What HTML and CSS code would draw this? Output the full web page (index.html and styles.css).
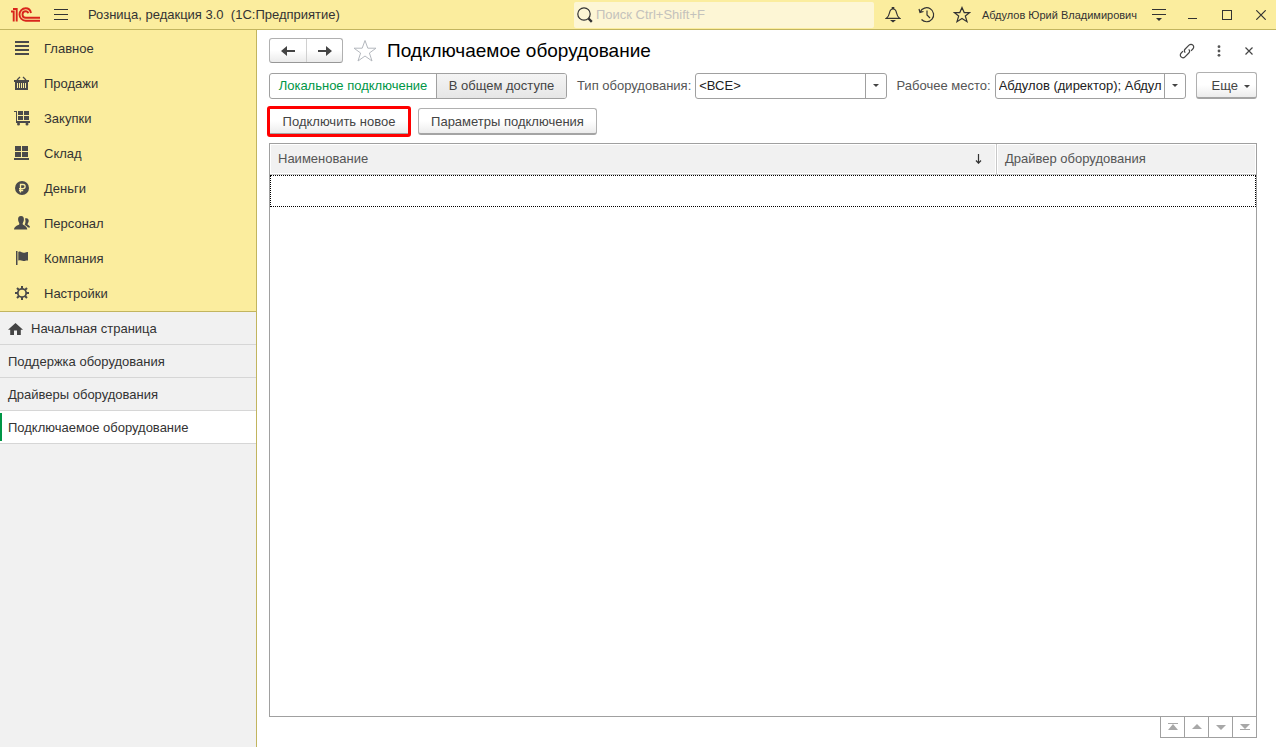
FILE: index.html
```html
<!DOCTYPE html>
<html lang="ru">
<head>
<meta charset="utf-8">
<title>Розница, редакция 3.0 (1С:Предприятие)</title>
<link rel="stylesheet" href="styles.css">
</head>
<body>
<header class="topbar">
  <svg class="logo" width="30" height="16" viewBox="0 0 30 16" fill="none" stroke="#d9261c" stroke-width="1.900"><path d="M0 4.500H2.700V14.500M2 2H5.700V14.500"/><path d="M20 6C19.400 3.200 17.500 1.300 14.700 1.300C11.200 1.300 8.500 4 8.500 7.400C8.500 11 11.400 13.700 14.700 13.700H29"/><path d="M17.200 6.300C16.900 4.900 15.900 4.200 14.700 4.200C12.900 4.200 11.500 5.500 11.500 7.400C11.500 9.400 13 10.800 14.700 10.800H29"/></svg>
  <button class="icon-btn menu-btn" aria-label="Меню"><svg width="14" height="12" viewBox="0 0 14 12" stroke="#333" shape-rendering="crispEdges"><path d="M0 .5H14M0 5.500H14M0 10.500H14"/></svg></button>
  <span class="app-title">Розница, редакция 3.0&nbsp; (1С:Предприятие)</span>
  <label class="search">
    <svg width="16" height="16" viewBox="0 0 16 16" fill="none" stroke="#333"><circle cx="7" cy="7" r="6.200" stroke-width="1.200"/><path d="M11.500 11.500L14.800 14.800" stroke-width="2.400"/></svg>
    <input type="text" placeholder="Поиск Ctrl+Shift+F" aria-label="Поиск">
  </label>
  <div class="tools">
    <button class="icon-btn" aria-label="Уведомления"><svg width="16" height="18" viewBox="0 0 16 18" fill="none" stroke="#333" stroke-width="1.200"><path d="M1.200 12.400H14.800C12.300 10.500 11.800 9 11.400 6.500C11 4.300 10 3 8 3C6 3 5 4.300 4.600 6.500C4.200 9 3.700 10.500 1.200 12.400ZM7.300 3V1.500H8.700V3"/><path d="M5 14H11L8 16.500Z" fill="#333" stroke="none"/></svg></button>
    <button class="icon-btn" aria-label="История"><svg width="18" height="18" viewBox="0 0 18 18" fill="none" stroke="#333" stroke-width="1.200"><path d="M2.200 6A7 7 0 1 1 3.500 13.500M1 3L2 6.400L5.500 5.500M9 4.500V9L12 12"/></svg></button>
    <button class="icon-btn" aria-label="Избранное"><svg width="18" height="18" viewBox="0 0 18 18" fill="none" stroke="#333" stroke-width="1.200"><path d="M9 1.500L11.200 6.600H16.500L12.300 10L14 15.700L9 12.400L4 15.700L5.700 10L1.500 6.600H6.800Z"/></svg></button>
  </div>
  <a class="user" href="#">Абдулов Юрий Владимирович</a>
  <div class="window-tools">
    <button class="icon-btn options" aria-label="Настройки окна"><svg width="14" height="14" viewBox="0 0 14 14"><path d="M0 1.500H14M0 6.500H14" stroke="#333"/><path d="M4 10H10L7 13Z" fill="#333"/></svg></button>
    <button class="icon-btn" aria-label="Свернуть"><svg width="10" height="10" viewBox="0 0 10 10" stroke="#333" shape-rendering="crispEdges"><path d="M0 8.500H9"/></svg></button>
    <button class="icon-btn" aria-label="Развернуть"><svg width="10" height="10" viewBox="0 0 10 10" fill="none" stroke="#333" shape-rendering="crispEdges"><path d="M.5.5H9.500V9.500H.5Z"/></svg></button>
    <button class="icon-btn" aria-label="Закрыть"><svg width="10" height="10" viewBox="0 0 10 10" stroke="#333" stroke-width="1.200"><path d="M.3.3L9.700 9.700M9.700.3L.3 9.700"/></svg></button>
  </div>
</header>
<div class="body">
  <aside class="sidebar">
    <nav class="sections">
      <a href="#"><svg viewBox="0 0 16 16" stroke="#4a4a4a" stroke-width="2"><path d="M1 1H15M1 5H15M1 9H15M1 13H15" shape-rendering="crispEdges"/></svg>Главное</a>
      <a href="#"><svg viewBox="0 0 16 16" fill="#4a4a4a"><path d="M0 4H15V6H14V14H1V6H0ZM3 7V12H4V7ZM5 7V12H6V7ZM7 7V12H8V7ZM9 7V12H10V7ZM11 7V12H12V7Z" fill-rule="evenodd"/><path d="M3 4L6 1M12 4L9 1" stroke="#4a4a4a" stroke-width="1.300"/></svg>Продажи</a>
      <a href="#"><svg viewBox="0 0 16 16" fill="#4a4a4a"><path d="M0 0H3V10H16V11.500H2V1H0ZM4 0H9V4H4ZM10 0H15V4H10ZM4 5H9V9H4ZM10 5H15V9H10Z" shape-rendering="crispEdges"/><circle cx="4.500" cy="13" r="1.500"/><circle cx="13" cy="13" r="1.500"/></svg>Закупки</a>
      <a href="#"><svg viewBox="0 0 16 16" fill="#4a4a4a" shape-rendering="crispEdges"><path d="M1 0H7V5H1ZM8 0H14V5H8ZM1 6H7V11H1ZM8 6H14V11H8ZM0 12H15V14H0Z"/></svg>Склад</a>
      <a href="#"><svg viewBox="0 0 16 16"><circle cx="8" cy="7" r="7" fill="#4a4a4a"/><path d="M6.500 11.500V3.500H9A2.100 2.100 0 0 1 9 7.700H5M5 9.500H9.200" fill="none" stroke="#fbed9e" stroke-width="1.300"/></svg>Деньги</a>
      <a href="#"><svg viewBox="0 0 16 16" fill="#4a4a4a"><path d="M7 0C9.300 0 10 1.600 9.900 3.700C9.800 5.500 8.800 6.500 8.600 8C9 9.500 13 9.500 13.300 13.500H0C.3 9.500 5 9.500 5.400 8C5.200 6.500 4.200 5.500 4.100 3.700C4 1.600 4.700 0 7 0Z"/><path d="M11 2.500C13.500 1.500 15 3 14.700 5.300C14.500 7 13.500 7.500 13.500 8.500C14.500 9.500 16 9.500 16 11.500H14C13.200 10.300 12 9.700 10.700 8.800C11.600 6.500 11.800 5 11 2.500Z"/></svg>Персонал</a>
      <a href="#"><svg viewBox="0 0 16 16" fill="#4a4a4a"><path d="M2 0H3.500V14H2ZM4.300 1C7 -.5 8 2.500 10.500 1.700C12 1.500 13 .8 14 1V9.500C11.500 9 11 10.500 8.500 9.700C6.500 9 6 9 4.300 9.500Z"/></svg>Компания</a>
      <a href="#"><svg viewBox="0 0 16 16" fill="none" stroke="#4a4a4a"><circle cx="8" cy="7" r="4.200" stroke-width="1.800"/><path d="M8 0V3M8 11V14M1 7H4M12 7H15M3 2L5 4M11 10L13 12M13 2L11 4M5 10L3 12" stroke-width="2"/></svg>Настройки</a>
    </nav>
    <nav class="tabs">
      <a href="#"><svg width="15" height="12" viewBox="0 0 15 12" fill="#444"><path d="M7.500 0L15 6.800H12.800V12H9V7.500H6V12H2.200V6.800H0Z"/></svg>Начальная страница</a>
      <a href="#">Поддержка оборудования</a>
      <a href="#">Драйверы оборудования</a>
      <a href="#" class="current" aria-current="page">Подключаемое оборудование</a>
    </nav>
  </aside>
  <main class="page">
    <div class="title-row">
      <div class="group history">
        <button aria-label="Назад"><svg width="14" height="10" viewBox="0 0 14 10" fill="#444"><path d="M0 5L6 0V4H14V6H6V10Z"/></svg></button>
        <button aria-label="Вперед"><svg width="14" height="10" viewBox="0 0 14 10" fill="#444"><path d="M14 5L8 0V4H0V6H8V10Z"/></svg></button>
      </div>
      <button class="icon-btn fav" aria-label="В избранное"><svg width="24" height="24" viewBox="0 0 24 24" fill="none" stroke="#b4b8be"><path d="M12 1.500L14.800 9.200H23L16.400 14L19 22L12 17L5 22L7.600 14L1 9.200H9.200Z"/></svg></button>
      <h1>Подключаемое оборудование</h1>
      <div class="form-tools">
        <button class="icon-btn" aria-label="Ссылка"><svg width="16" height="16" viewBox="0 0 16 16" fill="none" stroke="#444" stroke-width="1.200"><path d="M6.300 9.700C5 8.300 5.200 7 6.200 6L10 2.200C11.200 1 12.800 1 13.900 2.100C15 3.200 15 4.800 13.800 6L12 7.800M9.700 6.300C11 7.700 10.800 9 9.800 10L6 13.800C4.800 15 3.200 15 2.100 13.900C1 12.800 1 11.200 2.200 10L4 8.200"/></svg></button>
        <button class="icon-btn" aria-label="Еще действия"><svg width="4" height="12" viewBox="0 0 4 12" fill="#555"><circle cx="2" cy="1.700" r="1.400"/><circle cx="2" cy="6" r="1.400"/><circle cx="2" cy="10.300" r="1.400"/></svg></button>
        <button class="icon-btn" aria-label="Закрыть форму"><svg width="8" height="8" viewBox="0 0 8 8" stroke="#444" stroke-width="1.200"><path d="M.5.5L7.500 7.500M7.500.5L.5 7.500"/></svg></button>
      </div>
    </div>
    <div class="filter-row">
      <div class="group modes">
        <button class="active" aria-pressed="true">Локальное подключение</button>
        <button aria-pressed="false">В общем доступе</button>
      </div>
      <label for="type">Тип оборудования:</label>
      <div class="combo">
        <select id="type"><option>&lt;ВСЕ&gt;</option></select>
        <span class="drop"><svg width="6" height="3" viewBox="0 0 6 3" fill="#444"><path d="M0 0H6L3 3Z"/></svg></span>
      </div>
      <label for="place">Рабочее место:</label>
      <div class="combo">
        <select id="place"><option>Абдулов (директор); Абдулов Юрий</option></select>
        <span class="drop"><svg width="6" height="3" viewBox="0 0 6 3" fill="#444"><path d="M0 0H6L3 3Z"/></svg></span>
      </div>
      <button class="btn more">Еще<svg width="6" height="3" viewBox="0 0 6 3" fill="#444"><path d="M0 0H6L3 3Z"/></svg></button>
    </div>
    <div class="command-row">
      <button class="btn highlighted">Подключить новое</button>
      <button class="btn params">Параметры подключения</button>
    </div>
    <div class="list">
      <table>
        <colgroup><col><col class="driver"></colgroup>
        <thead><tr>
          <th><div class="head">Наименование<svg width="7" height="10" viewBox="0 0 7 10" fill="none" stroke="#333" stroke-width="1.200"><path d="M3.500 0V9M1 6.500L3.500 9.200L6 6.500"/></svg></div></th>
          <th><div class="head">Драйвер оборудования</div></th>
        </tr></thead>
        <tbody><tr><td></td><td></td></tr></tbody>
      </table>
    </div>
    <div class="pager">
      <button aria-label="В начало"><svg width="10" height="8" viewBox="0 0 10 8" fill="#a8a8a8"><path d="M0 0H10V1H0ZM5 1L10 7H0Z"/></svg></button>
      <button aria-label="Вверх"><svg width="10" height="8" viewBox="0 0 10 8" fill="#a8a8a8"><path d="M5 1L10 6H0Z"/></svg></button>
      <button aria-label="Вниз"><svg width="10" height="8" viewBox="0 0 10 8" fill="#a8a8a8"><path d="M0 2H10L5 7Z"/></svg></button>
      <button aria-label="В конец"><svg width="10" height="8" viewBox="0 0 10 8" fill="#a8a8a8"><path d="M0 1H10L5 6ZM0 6H10V7H0Z"/></svg></button>
    </div>
  </main>
</div>
</body>
</html>
```
FILE: styles.css
```css
* { box-sizing: border-box; }
body {
  margin: 0;
  min-height: 100vh;
  display: flex;
  flex-direction: column;
  background: #fff;
  color: #333;
  font: 13px/16px "Liberation Sans", Arial, sans-serif;
}
button, input, select { font: inherit; color: inherit; }
button { margin: 0; padding: 0; }
a { color: inherit; text-decoration: none; }
svg { display: block; flex: none; }
.icon-btn { display: flex; align-items: center; justify-content: center; border: 0; background: none; }

.topbar {
  display: flex;
  align-items: center;
  height: 30px;
  padding: 0 10px 0 11px;
  background: #fbed9e;
  border-bottom: 1px solid #c2b55f;
}
.menu-btn { margin: 0 20px 0 13px; }
.app-title { flex: 1; white-space: nowrap; }
.search {
  display: flex;
  align-items: center;
  width: 300px;
  height: 26px;
  padding: 0 3px;
  gap: 3px;
  background: #fdf6d5;
  border-radius: 2px;
}
.search input { flex: 1; min-width: 0; padding: 0; border: 0; outline: 0; background: none; }
.search input::placeholder { color: #c4c2bc; opacity: 1; }
.tools { display: flex; align-items: center; gap: 17px; margin: 0 11px; }
.user { font-size: 11px; line-height: 16px; white-space: nowrap; }
.window-tools { display: flex; align-items: center; gap: 24px; margin-left: 15px; }
.window-tools .options { margin-right: -2px; }

.body { flex: 1; display: flex; }
.sidebar { width: 257px; flex: none; background: #f1f1f1; border-right: 1px solid #c2b55f; }
.sections { padding: 1px 0 0; background: #fbed9e; border-bottom: 1px solid #c2b55f; }
.sections a { display: flex; align-items: center; height: 35px; padding-left: 14px; gap: 14px; }
.sections svg { width: 16px; height: 16px; }
.tabs a {
  display: flex;
  align-items: center;
  gap: 8px;
  height: 33px;
  padding: 2px 0 0 8px;
  border-bottom: 1px solid #d6d6d6;
}
.tabs .current { background: linear-gradient(#009646, #009646) 0 2px / 2px 28px no-repeat #fff; }

.page { flex: 1; min-width: 0; display: flex; flex-direction: column; padding: 8px 19px 9px 12px; }
.title-row { display: flex; align-items: center; height: 25px; }
.group {
  display: flex;
  border: 1px solid #a0a0a0;
  border-radius: 3px;
  background: linear-gradient(#fff 50%, #ebebeb);
}
.group button { border: 0; background: none; }
.group button + button { border-left: 1px solid #a0a0a0; }
.history { height: 25px; border-color: #b0b0b0; border-bottom-color: #979797; }
.history button { width: 36px; display: flex; align-items: center; justify-content: center; }
.history button + button { border-color: #d0d0d0; }
.fav { margin: 0 10px; }
h1 { flex: 1; margin: 0; font-size: 19px; line-height: 24px; font-weight: 400; color: #000; }
.form-tools { display: flex; align-items: center; gap: 22px; padding-right: 4px; }
.form-tools button:nth-child(2) { margin: 0 2px 0 0; }

.filter-row { display: flex; align-items: center; height: 27px; margin-top: 9px; color: #444; }
.modes { height: 26px; background: #fff; }
.modes button { width: 130px; color: #444; background: linear-gradient(#f4f4f4, #e6e6e6); border-radius: 0 2px 2px 0; }
.modes .active { width: 166px; color: #009646; background: none; }
.filter-row label { margin: 0 4px 0 10px; white-space: nowrap; color: #555; }
.combo {
  flex: 1;
  min-width: 0;
  height: 26px;
  display: flex;
  position: relative;
  border: 1px solid #a0a0a0;
  border-radius: 3px;
  color: #222;
}
.combo select {
  flex: 1;
  width: 100%;
  min-width: 0;
  appearance: none;
  padding: 0 23px 0 3px;
  border: 0;
  background: none;
  outline: 0;
}
.drop {
  position: absolute;
  inset: 0 0 0 auto;
  width: 21px;
  display: flex;
  align-items: center;
  justify-content: center;
  border-left: 1px solid #a0a0a0;
  pointer-events: none;
}
.btn {
  height: 27px;
  padding: 2px 0 0;
  border: 1px solid #b0b0b0;
  border-bottom: 2px solid #a4a4a4;
  border-radius: 3px;
  background: linear-gradient(#fff 50%, #ececec);
  color: #444;
}
.more { display: flex; align-items: center; justify-content: flex-end; gap: 6px; width: 61px; margin-left: 10px; padding-right: 6px; }

.command-row { display: flex; gap: 9px; margin: 9px 0 8px; }
.command-row .highlighted { width: 140px; outline: 3px solid #f00; outline-offset: -1px; border-radius: 1px; }
.command-row .params { width: 179px; }

.list { flex: 1; border: 1px solid #a0a0a0; }
table { width: 100%; table-layout: fixed; border-collapse: separate; border-spacing: 0; }
.driver { width: 260px; }
th { height: 31px; padding: 1px; text-align: left; font-weight: 400; color: #555; border-bottom: 1px solid #c8c8c8; }
th + th { border-left: 1px solid #c8c8c8; }
.head { display: flex; align-items: center; justify-content: space-between; height: 28px; padding: 0 13px 0 7px; background: #f1f1f1; }
td { height: 32px; padding: 0; }
tbody tr { outline: 1px dotted #000; outline-offset: -1px; }

.pager { display: flex; align-self: flex-end; margin-top: -1px; border: 1px solid #a0a0a0; }
.pager button { width: 24px; height: 20px; display: flex; align-items: center; justify-content: center; border: 0; background: #fff; }
.pager button:first-child { width: 23px; }
.pager button + button { border-left: 1px solid #a0a0a0; }
```
